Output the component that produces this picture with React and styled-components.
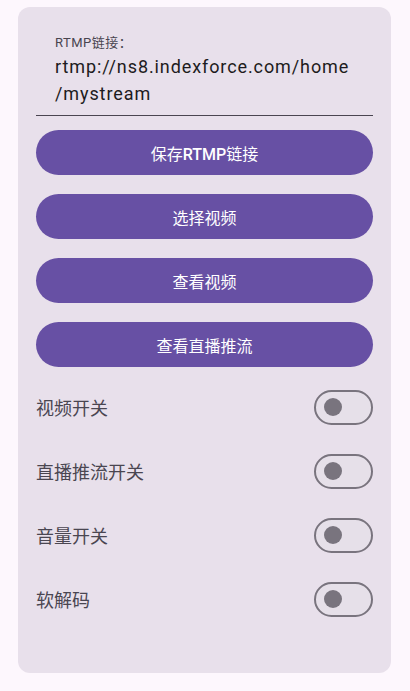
import React from 'react';
import styled, { createGlobalStyle } from 'styled-components';

const GlobalStyle = createGlobalStyle`
  html, body {
    margin: 0;
    padding: 0;
    background: #fdf7fd;
  }

  body {
    font-family: Roboto, "Noto Sans CJK SC", sans-serif;
  }
`;

const StyledPage = styled.div`
  width: 410px;
  height: 691px;
  padding: 7px 19px 0 18px;
  box-sizing: border-box;
`;

const StyledCard = styled.section`
  display: flex;
  flex-direction: column;
  height: 666px;
  padding: 0 18px;
  box-sizing: border-box;
  background: #e8e0eb;
  border-radius: 12px;
`;

const StyledField = styled.div`
  display: flex;
  flex-direction: column;
  padding: 27px 10px 8px 19px;
  border-bottom: 1px solid #4a4551;
`;

const StyledFieldLabel = styled.label`
  font-size: 13px;
  line-height: 17px;
  letter-spacing: 0.5px;
  color: #49454f;
`;

const StyledFieldValue = styled.div`
  margin-top: 2px;
  font-size: 18px;
  line-height: 27px;
  letter-spacing: 0.9px;
  color: #1d1b20;
`;

const StyledButtons = styled.div`
  display: flex;
  flex-direction: column;
  gap: 19px;
  margin-top: 14px;
`;

const StyledButton = styled.button`
  height: 45px;
  border: none;
  border-radius: 23px;
  background: #6750a4;
  color: #ffffff;
  font-family: Roboto, "Noto Sans CJK SC", sans-serif;
  font-size: 16px;
  font-weight: 400;
  cursor: pointer;
`;

const StyledStrong = styled.span`
  font-weight: 500;
`;

const StyledToggles = styled.div`
  display: flex;
  flex-direction: column;
  gap: 16px;
  margin-top: 16px;
`;

const StyledToggleRow = styled.div`
  display: flex;
  align-items: center;
  justify-content: space-between;
  height: 48px;
`;

const StyledToggleLabel = styled.span`
  font-family: "Noto Sans CJK SC", sans-serif;
  font-size: 18px;
  color: #4a4651;
`;

const StyledSwitch = styled.span`
  display: flex;
  align-items: center;
  width: 59px;
  height: 35px;
  padding: 0 8px;
  box-sizing: border-box;
  border: 2px solid #79747e;
  border-radius: 18px;
  background: #e6e0e9;
`;

const StyledThumb = styled.span`
  width: 18px;
  height: 18px;
  border-radius: 50%;
  background: #79747e;
`;

const buttons = [
  { id: 'save', label: <>保存<StyledStrong>RTMP</StyledStrong>链接</> },
  { id: 'pick', label: '选择视频' },
  { id: 'view', label: '查看视频' },
  { id: 'live', label: '查看直播推流' },
];
const toggles = ['视频开关', '直播推流开关', '音量开关', '软解码'];

const App = () => {
  return (
    <>
      <GlobalStyle />
      <StyledPage>
        <StyledCard>
          <StyledField>
            <StyledFieldLabel>RTMP链接：</StyledFieldLabel>
            <StyledFieldValue>
              rtmp://ns8.indexforce.com/home<wbr />/mystream
            </StyledFieldValue>
          </StyledField>
          <StyledButtons>
            {buttons.map((button) => (
              <StyledButton key={button.id}>{button.label}</StyledButton>
            ))}
          </StyledButtons>
          <StyledToggles>
            {toggles.map((label) => (
              <StyledToggleRow key={label}>
                <StyledToggleLabel>{label}</StyledToggleLabel>
                <StyledSwitch>
                  <StyledThumb />
                </StyledSwitch>
              </StyledToggleRow>
            ))}
          </StyledToggles>
        </StyledCard>
      </StyledPage>
    </>
  );
};

export default App;
